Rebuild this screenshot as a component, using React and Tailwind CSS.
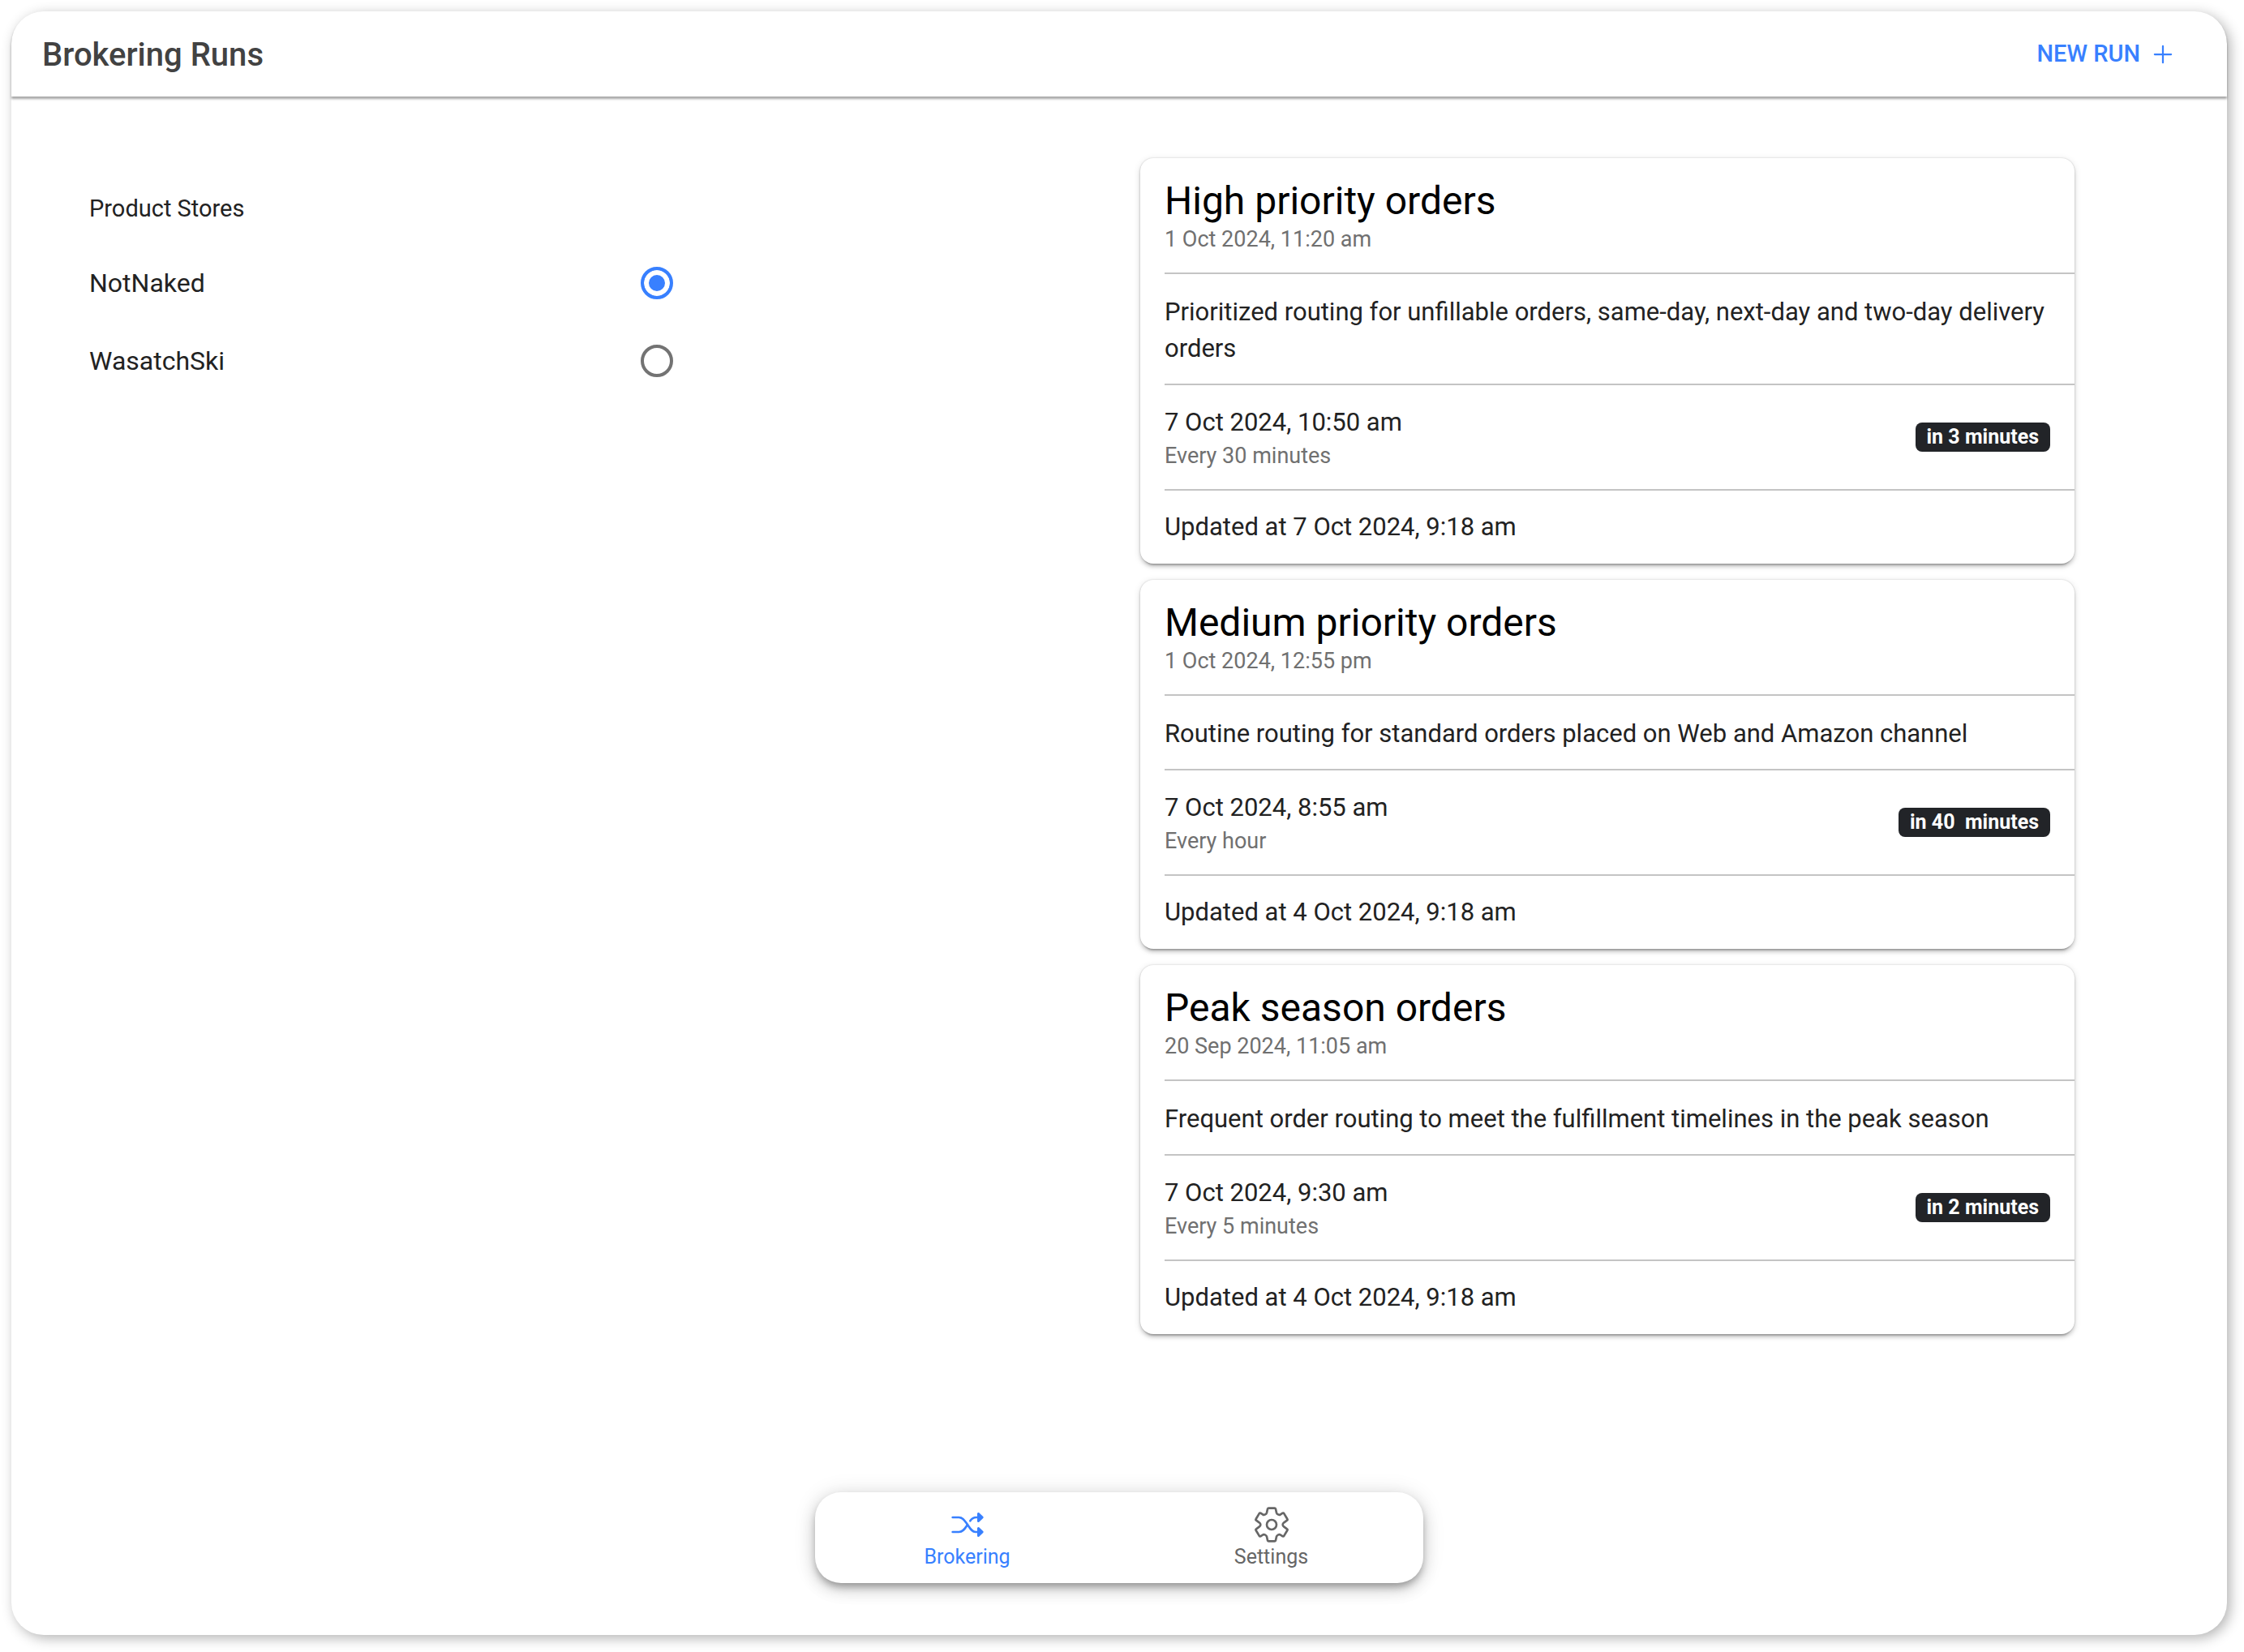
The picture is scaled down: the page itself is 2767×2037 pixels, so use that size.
import { useState } from "react";
import { IoAddOutline } from "react-icons/io5";

const stores = ["NotNaked", "WasatchSki"];

const runs = [
  {
    name: "High priority orders",
    created: "1 Oct 2024, 11:20 am",
    description:
      "Prioritized routing for unfillable orders, same-day, next-day and two-day delivery orders",
    nextRun: "7 Oct 2024, 10:50 am",
    frequency: "Every 30 minutes",
    due: "in 3 minutes",
    updated: "Updated at 7 Oct 2024, 9:18 am",
  },
  {
    name: "Medium priority orders",
    created: "1 Oct 2024, 12:55 pm",
    description: "Routine routing for standard orders placed on Web and Amazon channel",
    nextRun: "7 Oct 2024, 8:55 am",
    frequency: "Every hour",
    due: "in 40  minutes",
    updated: "Updated at 4 Oct 2024, 9:18 am",
  },
  {
    name: "Peak season orders",
    created: "20 Sep 2024, 11:05 am",
    description: "Frequent order routing to meet the fulfillment timelines in the peak season",
    nextRun: "7 Oct 2024, 9:30 am",
    frequency: "Every 5 minutes",
    due: "in 2 minutes",
    updated: "Updated at 4 Oct 2024, 9:18 am",
  },
];

function ShuffleIcon() {
  return (
    <svg
      viewBox="150 84 132 132"
      className="size-11"
      fill="none"
      stroke="currentColor"
      strokeWidth="8"
      strokeLinecap="round"
      strokeLinejoin="round"
      aria-hidden="true"
    >
      <path d="M161 123H184C200 123 207 138 216 150C225 163 232 177 246 177H256" />
      <path d="M161 177H184C200 177 207 163 216 150" />
      <path d="M226 136C232 127 239 123 248 123H256" />
      <path d="M256 109V137L271 123ZM256 163V191L271 177Z" fill="currentColor" />
    </svg>
  );
}

function GearIcon() {
  return (
    <svg
      viewBox="-66 -66 132 132"
      className="size-11"
      fill="none"
      stroke="currentColor"
      strokeWidth="8"
      strokeLinejoin="round"
      aria-hidden="true"
    >
      <path d="M-11-61H11Q14-61 15-58L18-44Q19-40 25-37Q29-35 33-38L41-43Q44-44 46-41L58-21Q60-18 57-16L46-8Q41-4 41 0Q41 4 46 8L57 16Q60 18 58 21L46 41Q44 44 41 43L33 38Q29 35 25 37Q19 40 18 44L15 58Q14 61 11 61H-11Q-14 61-15 58L-18 44Q-19 40-25 37Q-29 35-33 38L-41 43Q-44 44-46 41L-58 21Q-60 18-57 16L-46 8Q-41 4-41 0Q-41-4-46-8L-57-16Q-60-18-58-21L-46-41Q-44-44-41-43L-33-38Q-29-35-25-37Q-19-40-18-44L-15-58Q-14-61-11-61Z" />
      <circle r="18" />
    </svg>
  );
}

function StoreOption({ name, checked, onSelect }) {
  return (
    <label className="flex h-24 cursor-pointer items-center justify-between text-[32px] leading-10">
      {name}
      <input
        type="radio"
        name="store"
        checked={checked}
        onChange={onSelect}
        className="size-10 appearance-none rounded-full border-4 border-[#737373] bg-white checked:border-[#3880ff] checked:bg-[#3880ff] checked:shadow-[inset_0_0_0_6px_white]"
      />
    </label>
  );
}

function RunCard({ run }) {
  return (
    <article className="rounded-2xl bg-white pl-[30px] shadow-[0_6px_2px_-4px_rgba(0,0,0,0.2),0_4px_4px_rgba(0,0,0,0.14),0_2px_10px_rgba(0,0,0,0.12),0_0_2px_rgba(0,0,0,0.2)]">
      <header className="flex h-[141px] flex-col pt-6">
        <h2 className="text-5xl leading-[58px] text-black">{run.name}</h2>
        <p className="text-[27px] leading-9 text-[#707070]">{run.created}</p>
      </header>
      <p className="border-t-2 border-[#c4c4c4] pt-6 pr-[30px] pb-[21px] text-[31px] leading-[45px]">
        {run.description}
      </p>
      <div className="flex h-[130px] items-center justify-between border-t-2 border-[#c4c4c4] pr-[30px]">
        <div className="pt-1">
          <p className="text-[31px] leading-[42px]">{run.nextRun}</p>
          <p className="text-[27px] leading-10 text-[#707070]">{run.frequency}</p>
        </div>
        <span className="flex h-9 items-center whitespace-pre rounded-lg bg-[#222428] px-[14px] text-[25px] font-bold text-white">
          {run.due}
        </span>
      </div>
      <p className="flex h-[92px] items-center border-t-2 border-[#c4c4c4] text-[31px]">
        {run.updated}
      </p>
    </article>
  );
}

export default function App() {
  const [store, setStore] = useState("NotNaked");

  return (
    <div className="flex min-h-screen bg-white pt-[14px] pr-[21px] pb-[21px] pl-[14px] font-['Roboto',sans-serif] text-[#222222]">
      <div className="flex flex-1 flex-col rounded-[40px] bg-white shadow-[4px_4px_16px_rgba(0,0,0,0.3)]">
        <header className="flex h-[105px] items-center justify-between rounded-t-[40px] pr-[61px] pl-[38px] shadow-[0_3px_3px_rgba(0,0,0,0.35)]">
          <h1 className="pt-0.5 text-[40px] font-medium text-[#424242]">Brokering Runs</h1>
          <button className="flex items-center gap-[10px] text-[29px] font-medium text-[#3880ff]">
            NEW RUN
            <IoAddOutline className="size-9" />
          </button>
        </header>

        <main className="grid grid-cols-[9fr_8fr] pt-[76px] pr-[188px] pb-12 pl-24">
          <fieldset className="max-w-[720px] pt-[42px]">
            <legend className="contents text-[29px] leading-10">Product Stores</legend>
            <div className="pt-6">
              {stores.map((name) => (
                <StoreOption
                  key={name}
                  name={name}
                  checked={store === name}
                  onSelect={() => setStore(name)}
                />
              ))}
            </div>
          </fieldset>

          <section className="flex flex-col gap-5">
            {runs.map((run) => (
              <RunCard key={run.name} run={run} />
            ))}
          </section>
        </main>

        <nav className="mx-auto mt-auto mb-16 grid h-28 w-[750px] grid-cols-2 rounded-[32px] bg-white shadow-[0_6px_10px_-2px_rgba(0,0,0,0.3),0_8px_20px_rgba(0,0,0,0.14),0_2px_28px_rgba(0,0,0,0.12)]">
          <a href="#brokering" className="flex flex-col items-center pt-[18px] text-[#3880ff]">
            <ShuffleIcon />
            <span className="text-[25px] leading-9">Brokering</span>
          </a>
          <a href="#settings" className="flex flex-col items-center pt-[18px] text-[#666666]">
            <GearIcon />
            <span className="text-[25px] leading-9">Settings</span>
          </a>
        </nav>
      </div>
    </div>
  );
}
